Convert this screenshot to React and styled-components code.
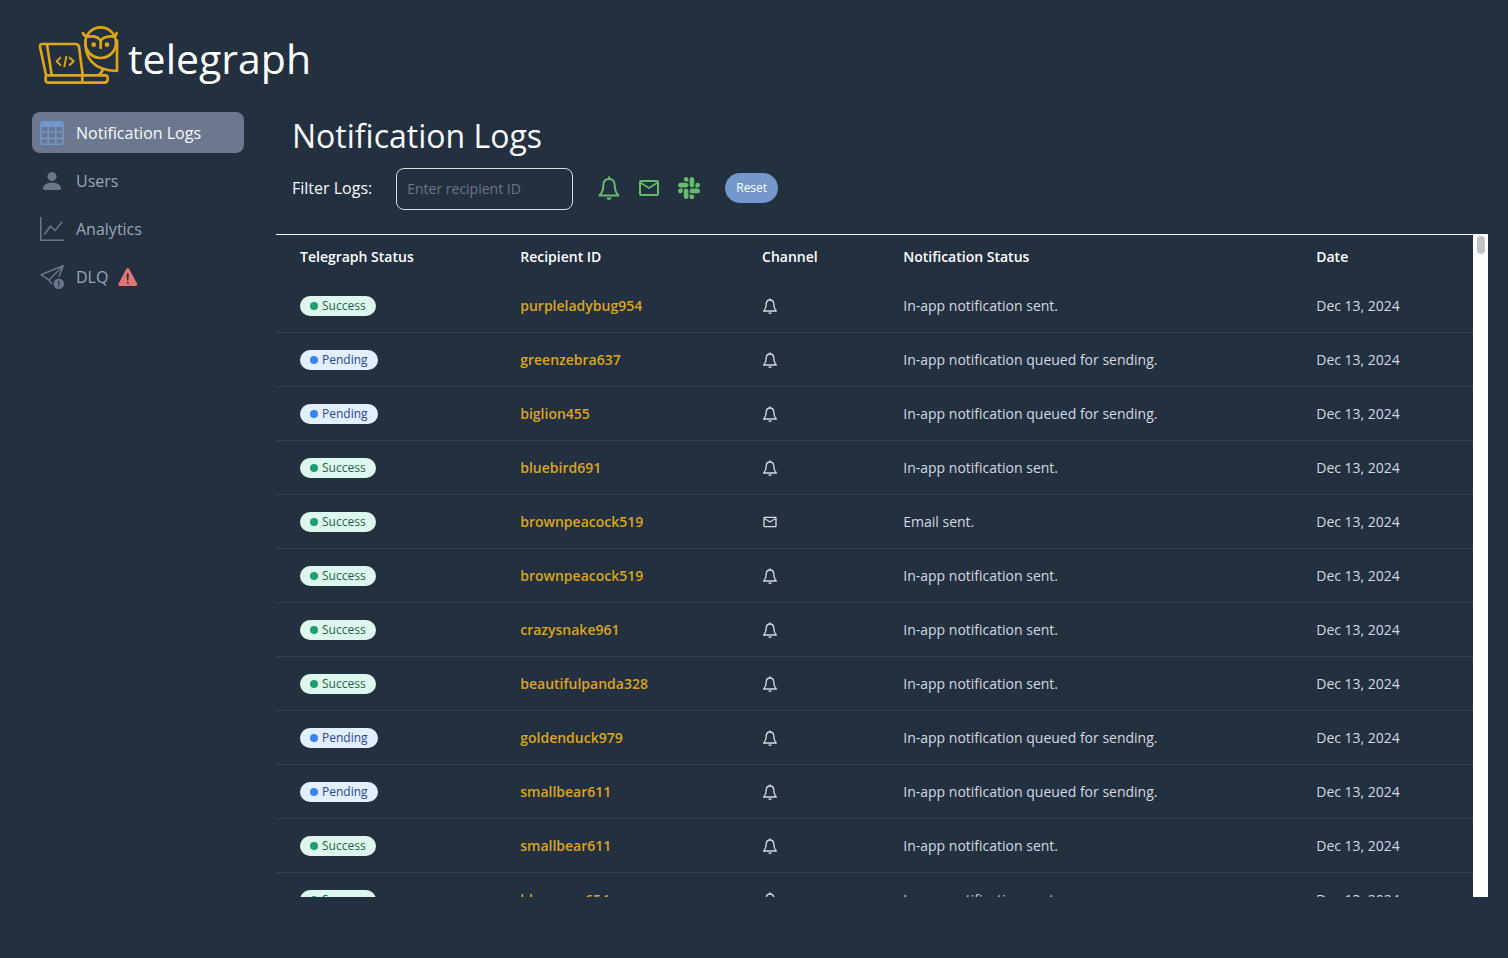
import React, { useState } from 'react';
import styled, { createGlobalStyle, css } from 'styled-components';
import {
  BsTable,
  BsPersonFill,
  BsGraphUp,
  BsSendExclamation,
  BsSlack,
} from 'react-icons/bs';
import { MdMailOutline } from 'react-icons/md';
import { IoWarning } from 'react-icons/io5';

const GlobalStyle = createGlobalStyle`
  *, *::before, *::after { box-sizing: border-box; }
  body {
    margin: 0;
    background: #233040;
    color: #f8fafc;
    font-family: 'Open Sans', 'Noto Sans', sans-serif;
    font-size: 16px;
    line-height: 24px;
  }
`;

const Page = styled.div`
  height: 100vh;
  display: flex;
  flex-direction: column;
`;

const Header = styled.header`
  display: flex;
  align-items: center;
  gap: 8px;
  height: 112px;
  padding: 0 38px;
  flex: none;
`;

const LogoMark = styled.svg`
  width: 82px;
  height: 60px;
  fill: none;
  stroke: #dca51c;
  stroke-width: 8;
  stroke-linecap: round;
  stroke-linejoin: round;
`;

const LogoText = styled.span`
  padding-top: 4px;
  font-size: 41px;
  line-height: 56px;
  color: #ffffff;
`;

const Body = styled.div`
  display: flex;
  flex: 1;
  min-height: 0;
  gap: 32px;
  padding: 0 20px 61px 32px;
`;

const Sidebar = styled.nav`
  display: flex;
  flex-direction: column;
  gap: 7px;
  width: 212px;
  flex: none;
`;

const NavLink = styled.a`
  display: flex;
  align-items: center;
  gap: 12px;
  height: 41px;
  padding: 0 8px;
  border-radius: 8px;
  color: #9ca6b6;
  text-decoration: none;

  > svg:first-child {
    width: 24px;
    height: 24px;
    color: #6b7688;
  }

  ${({ $active }) =>
    $active &&
    css`
      background: #6c788f;
      color: #f8fafc;
      > svg:first-child {
        color: #7097cb;
      }
    `}
`;

const AlertIcon = styled(IoWarning)`
  width: 24px;
  height: 24px;
  margin-left: -4px;
  color: #e57373;
`;

const Main = styled.main`
  display: flex;
  flex-direction: column;
  flex: 1;
  min-width: 0;
`;

const Title = styled.h1`
  margin: 0 0 8px;
  padding: 0 16px;
  font-size: 32px;
  line-height: 48px;
  font-weight: 400;
`;

const FilterBar = styled.form`
  display: flex;
  align-items: center;
  gap: 24px;
  padding: 0 16px 24px;
`;

const FilterInput = styled.input`
  width: 177px;
  height: 42px;
  padding: 0 10px 2px;
  border: 1px solid #d8dde5;
  border-radius: 8px;
  background: transparent;
  color: #f8fafc;
  font: inherit;
  font-size: 14px;

  &::placeholder {
    color: #6b7585;
    opacity: 1;
  }
`;

const FilterLabel = styled.label`
  padding-bottom: 2px;
`;

const ChannelFilters = styled.div`
  display: flex;
  gap: 16px;
  padding-bottom: 2px;
`;

const IconButton = styled.button`
  display: flex;
  align-items: center;
  justify-content: center;
  width: 24px;
  height: 24px;
  padding: 0;
  border: 0;
  background: none;
  color: #66bb6a;
  cursor: pointer;

  svg {
    width: ${({ $iconSize }) => $iconSize}px;
    height: ${({ $iconSize }) => $iconSize}px;
  }
`;

const ResetButton = styled.button`
  height: 30px;
  margin-bottom: 2px;
  padding: 0 11px;
  border: 0;
  border-radius: 15px;
  background: #7398c9;
  color: #ffffff;
  font: inherit;
  font-size: 12px;
  line-height: 16px;
  cursor: pointer;
`;

const TablePanel = styled.section`
  display: flex;
  flex: 1;
  min-height: 0;
  border-top: 1px solid #f1f3f7;
`;

const TableScroller = styled.div`
  flex: 1;
  min-width: 0;
  overflow-y: auto;
  scrollbar-width: none;
`;

const ScrollRail = styled.div`
  width: 15px;
  padding: 1px 3px 0 4px;
  background: #ffffff;
`;

const ScrollThumb = styled.div`
  height: 18px;
  border-radius: 4px;
  background: #c1c3c6;
`;

const LogTable = styled.table`
  width: 100%;
  table-layout: fixed;
  border-collapse: separate;
  border-spacing: 0;
  font-size: 14px;
  line-height: 20px;
  text-align: left;
`;

const Column = styled.col`
  width: ${({ $width }) => $width};
`;

const HeadCell = styled.th`
  height: 44px;
  padding: 0 24px;
  font-weight: 600;
  color: #ffffff;
`;

const Cell = styled.td`
  height: 54px;
  padding: 0 24px;
  border-bottom: 1px solid #334155;
  color: #d3d9e2;

  > svg {
    display: block;
    width: 16px;
    height: 16px;
  }
`;

const RecipientLink = styled.a`
  font-weight: 600;
  color: #dca51c;
  text-decoration: none;
`;

const tones = {
  Success: { back: '#def7ec', text: '#1c5f4d', dot: '#1f9d74' },
  Pending: { back: '#e1effe', text: '#2b4590', dot: '#3b82f6' },
};

const Badge = styled.span`
  display: flex;
  align-items: center;
  gap: 4px;
  width: fit-content;
  height: 20px;
  padding: 0 10px;
  border-radius: 10px;
  font-size: 12px;
  line-height: 16px;
  background: ${({ $status }) => tones[$status].back};
  color: ${({ $status }) => tones[$status].text};

  &::before {
    content: '';
    width: 8px;
    height: 8px;
    border-radius: 50%;
    background: ${({ $status }) => tones[$status].dot};
  }
`;

function BellIcon(props) {
  return (
    <svg
      viewBox="0 0 24 24"
      fill="none"
      stroke="currentColor"
      strokeWidth="2"
      strokeLinecap="round"
      strokeLinejoin="round"
      {...props}
    >
      <path d="M12 3 C8 3 6.300 5.800 6.300 9.500 C6.300 14 5 17 2.500 19.500 H21.500 C19 17 17.700 14 17.700 9.500 C17.700 5.800 16 3 12 3 Z" />
      <path d="M12 1.200 V3" />
      <path d="M9.500 21.600 H14.500 A2.500 2.400 0 0 1 9.500 21.600 Z" fill="currentColor" stroke="none" />
    </svg>
  );
}

const navItems = [
  { label: 'Notification Logs', icon: BsTable, href: '#logs', active: true },
  { label: 'Users', icon: BsPersonFill, href: '#users' },
  { label: 'Analytics', icon: BsGraphUp, href: '#analytics' },
  { label: 'DLQ', icon: BsSendExclamation, href: '#dlq', alert: true },
];

const channels = {
  inApp: { name: 'In-app', icon: BellIcon, size: 24 },
  email: { name: 'Email', icon: MdMailOutline, size: 24 },
  slack: { name: 'Slack', icon: BsSlack, size: 22 },
};

const SENT = 'In-app notification sent.';
const QUEUED = 'In-app notification queued for sending.';

const logs = [
  ['Success', 'purpleladybug954', 'inApp', SENT],
  ['Pending', 'greenzebra637', 'inApp', QUEUED],
  ['Pending', 'biglion455', 'inApp', QUEUED],
  ['Success', 'bluebird691', 'inApp', SENT],
  ['Success', 'brownpeacock519', 'email', 'Email sent.'],
  ['Success', 'brownpeacock519', 'inApp', SENT],
  ['Success', 'crazysnake961', 'inApp', SENT],
  ['Success', 'beautifulpanda328', 'inApp', SENT],
  ['Pending', 'goldenduck979', 'inApp', QUEUED],
  ['Pending', 'smallbear611', 'inApp', QUEUED],
  ['Success', 'smallbear611', 'inApp', SENT],
  ['Success', 'blueswan654', 'inApp', SENT],
];

function OwlLogo() {
  return (
    <LogoMark viewBox="24 18 246 180" aria-hidden="true">
      <path d="M48 165 L30 80 Q29 72 38 72 H137 Q145 72 147 80 L158 165" />
      <path d="M51 73 L65 165" />
      <path d="M53 166 H226 Q233 166 233 174 V178 Q233 188 223 188 H55 Q47 188 47 180 V172 Q47 166 53 166 Z" />
      <path d="M157 167 V187" />
      <path d="M91 113 L80 124 L91 135 M109 110 L103 139 M119 113 L131 124 L119 135" strokeWidth="6" />
      <circle cx="212" cy="68" r="46" />
      <path d="M159 39 Q162 48 171 50 C190 47 206 51 212 63 C218 51 236 47 253 50 Q260 46 260 39" />
      <path d="M212 62 V84" />
      <path d="M166 62 C164 112 188 151 261 153 V62" />
      <path d="M218 148 Q216 160 206 165" />
      <circle cx="191" cy="74" r="3" fill="#dca51c" />
      <circle cx="231" cy="74" r="3" fill="#dca51c" />
    </LogoMark>
  );
}

export default function App() {
  const [recipient, setRecipient] = useState('');

  return (
    <Page>
      <GlobalStyle />
      <Header>
        <OwlLogo />
        <LogoText>telegraph</LogoText>
      </Header>
      <Body>
        <Sidebar aria-label="Main">
          {navItems.map(({ label, icon: Icon, href, active, alert }) => (
            <NavLink key={label} href={href} $active={active}>
              <Icon />
              {label}
              {alert && <AlertIcon />}
            </NavLink>
          ))}
        </Sidebar>
        <Main>
          <Title>Notification Logs</Title>
          <FilterBar onSubmit={(e) => e.preventDefault()}>
            <FilterLabel htmlFor="recipient">Filter Logs:</FilterLabel>
            <FilterInput
              id="recipient"
              placeholder="Enter recipient ID"
              value={recipient}
              onChange={(e) => setRecipient(e.target.value)}
            />
            <ChannelFilters>
              {Object.values(channels).map(({ name, icon: Icon, size }) => (
                <IconButton key={name} type="button" aria-label={name} $iconSize={size}>
                  <Icon />
                </IconButton>
              ))}
            </ChannelFilters>
            <ResetButton type="button" onClick={() => setRecipient('')}>
              Reset
            </ResetButton>
          </FilterBar>
          <TablePanel>
            <TableScroller>
              <LogTable>
                <colgroup>
                  <Column $width="18.4%" />
                  <Column $width="20.2%" />
                  <Column $width="11.8%" />
                  <Column $width="34.5%" />
                  <Column $width="15.1%" />
                </colgroup>
                <thead>
                  <tr>
                    <HeadCell>Telegraph Status</HeadCell>
                    <HeadCell>Recipient ID</HeadCell>
                    <HeadCell>Channel</HeadCell>
                    <HeadCell>Notification Status</HeadCell>
                    <HeadCell>Date</HeadCell>
                  </tr>
                </thead>
                <tbody>
                  {logs.map(([status, id, channel, message], index) => {
                    const { name, icon: Icon } = channels[channel];
                    return (
                      <tr key={index}>
                        <Cell>
                          <Badge $status={status}>{status}</Badge>
                        </Cell>
                        <Cell>
                          <RecipientLink href={`#${id}`}>{id}</RecipientLink>
                        </Cell>
                        <Cell>
                          <Icon aria-label={name} />
                        </Cell>
                        <Cell>{message}</Cell>
                        <Cell>Dec 13, 2024</Cell>
                      </tr>
                    );
                  })}
                </tbody>
              </LogTable>
            </TableScroller>
            <ScrollRail>
              <ScrollThumb />
            </ScrollRail>
          </TablePanel>
        </Main>
      </Body>
    </Page>
  );
}
